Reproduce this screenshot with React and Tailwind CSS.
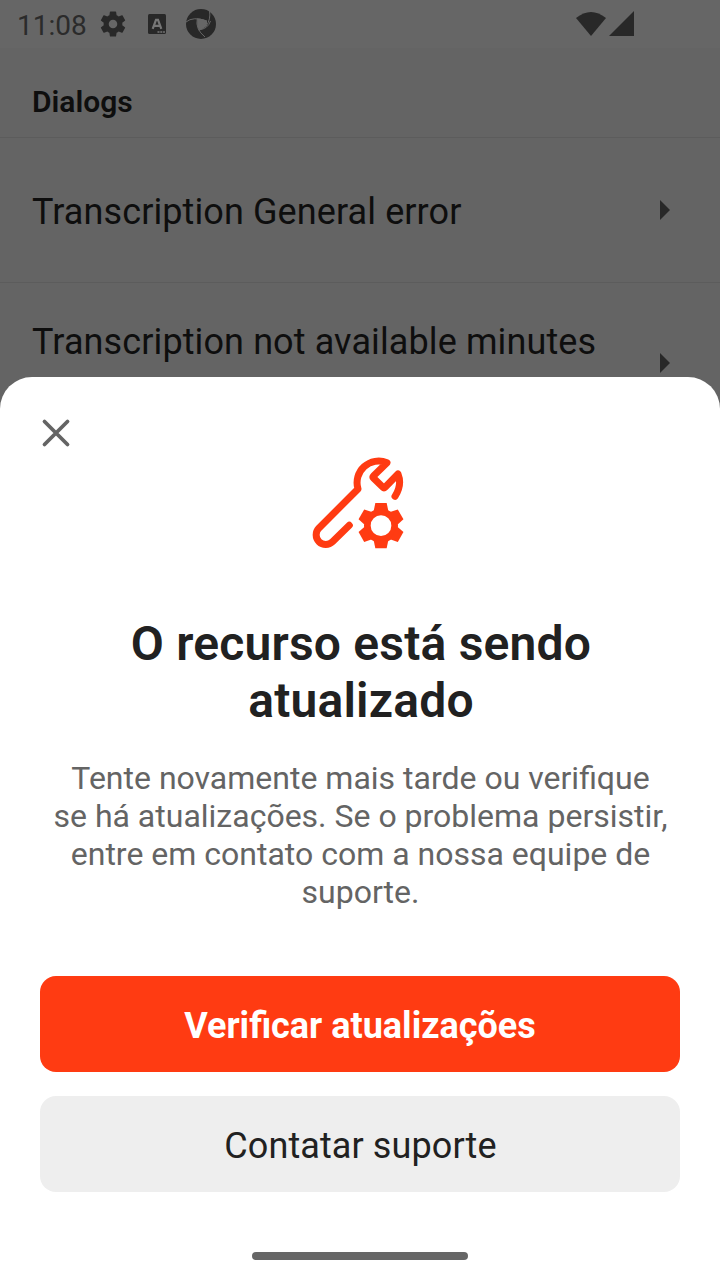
function StatusIcons() {
  return (
    <div className="flex h-12 items-center">
      <span className="w-[85px] pt-1 pl-[17px] text-[28px] leading-[44px] text-[#2b2b2b]">11:08</span>
      <svg className="ml-[15px] shrink-0" width="26" height="26" viewBox="2 2 20 20" fill="#282828">
        <path d="M19.14 12.94c.04-.3.06-.61.06-.94 0-.32-.02-.64-.07-.94l2.03-1.58c.18-.14.23-.41.12-.61l-1.92-3.32c-.12-.22-.37-.29-.59-.22l-2.39.96c-.5-.38-1.03-.7-1.62-.94l-.36-2.54c-.04-.24-.24-.41-.48-.41h-3.84c-.24 0-.43.17-.47.41l-.36 2.54c-.59.24-1.13.57-1.62.94l-2.39-.96c-.22-.08-.47 0-.59.22L2.740 8.87c-.12.21-.08.47.12.61l2.03 1.58c-.05.3-.09.63-.09.94s.02.64.07.94l-2.03 1.58c-.18.14-.23.41-.12.61l1.92 3.32c.12.22.37.29.59.22l2.39-.96c.5.38 1.030.7 1.62.94l.36 2.54c.05.24.24.41.48.41h3.84c.24 0 .44-.17.47-.41l.36-2.54c.59-.24 1.13-.56 1.62-.94l2.39.96c.22.08.47 0 .59-.22l1.92-3.32c.12-.22.07-.47-.12-.61l-2.01-1.58zM12 15.300a3.300 3.300 0 1 1 0-6.600 3.300 3.300 0 0 1 0 6.600z" />
      </svg>
      <svg className="ml-[21px] shrink-0" width="20" height="22" viewBox="0 0 20 22">
        <rect x="1" y="1" width="18" height="20" rx="1.5" fill="#282828" />
        <path d="M5.700 15.800 9 6.800h2l3.300 9M7.300 12.800h5.400" fill="none" stroke="#777" strokeWidth="2.200" />
        <path d="M10.500 19h2m.8 0h2m.8 0h1.800" stroke="#777" strokeWidth="1.500" />
      </svg>
      <svg className="ml-[19px] shrink-0" width="30" height="30" viewBox="-15 -15 30 30">
        <circle r="15" fill="#282828" />
        <path d="M-3.700-5.500Q2-6 6-3Q6.500 0 5 2.500Q2 5.500-2.500 6Q-4.500 0-3.700-5.500Z" fill="#666" />
        <g fill="none" stroke="#666" strokeWidth="1">
          <path d="M-15-2Q-8-8 6-3" />
          <path d="M8.500-13Q10-5 5 2.500" />
          <path d="M-2.500 6Q7 5 9.500-3" />
          <path d="M-3.700-5.500Q-6 5 4 13" />
        </g>
      </svg>
      <svg className="ml-[360px] shrink-0" width="60" height="26" viewBox="0 0 60 26" fill="#282828">
        <path d="M0 7Q15-5 30 7L15 25Z" />
        <path d="M33 25 58 0V25Z" />
      </svg>
    </div>
  );
}

function Arrow() {
  return (
    <svg width="10" height="20" viewBox="0 0 10 20" fill="#282828">
      <path d="M0 0 10 10 0 20Z" />
    </svg>
  );
}

const toothAngles = [0, 60, 120, 180, 240, 300];

function WrenchIcon() {
  return (
    <svg className="mx-auto block" width="120" height="115" viewBox="0 0 360 345">
      <path
        d="M148 241 97.500 290.500A29 29 0 0 1 56.500 249.500L174 132A65 65 0 0 1 261 53L221 92Q217 96 221 100L248 126Q252 130 256 126L294 87Q307 120 285 154"
        fill="none"
        stroke="#ff3b12"
        strokeWidth="21"
        strokeLinecap="round"
        strokeLinejoin="round"
      />
      <g transform="translate(243 242)">
        <circle r="41" fill="none" stroke="#ff3b12" strokeWidth="20" />
        {toothAngles.map((a) => (
          <path key={a} d="M-17-68H17L22-44H-22Z" fill="#ff3b12" transform={`rotate(${a})`} />
        ))}
      </g>
    </svg>
  );
}

export default function App() {
  return (
    <div className="relative h-[1280px] w-[720px] overflow-hidden bg-[#646464] font-['Roboto',sans-serif]">
      <div className="bg-[#666666]">
        <StatusIcons />
      </div>
      <h2 className="flex h-[90px] items-center border-b border-[#5c5c5c] px-8 pt-[18px] text-[30px] leading-[34px] font-semibold text-[#0e0e0e]">
        Dialogs
      </h2>
      <div className="flex h-[145px] items-center justify-between border-b border-[#5c5c5c] pr-[50px] pl-8 text-4xl leading-[42px] tracking-[0.1px] text-[#0e0e0e]">
        <span className="pt-1">Transcription General error</span>
        <Arrow />
      </div>
      <div className="flex h-[160px] items-center justify-between pr-[50px] pl-8 text-4xl leading-[42px] tracking-[0.11px] text-[#0e0e0e]">
        <span className="pb-[42px]">Transcription not available minutes</span>
        <Arrow />
      </div>

      <section className="absolute inset-x-0 bottom-0 flex h-[903px] flex-col rounded-t-[32px] bg-white px-10">
        <button className="mt-10 h-8 w-8" aria-label="Fechar">
          <svg width="32" height="32" viewBox="0 0 32 32" stroke="#646464" strokeWidth="3.800" strokeLinecap="round">
            <path d="M4.500 4.500 27.500 27.500M27.500 4.500 4.500 27.500" />
          </svg>
        </button>
        <div className="-mt-1">
          <WrenchIcon />
        </div>
        <h1 className="mt-[55px] pl-[2px] text-center text-5xl leading-[57px] font-semibold tracking-[0.2px] text-[#212121]">
          O recurso está sendo<br />atualizado
        </h1>
        <p className="mt-[30px] pl-px text-center text-[32px] leading-[38px] whitespace-nowrap text-[#646464]">
          Tente novamente mais tarde ou verifique<br />
          se há atualizações. Se o problema persistir,<br />
          entre em contato com a nossa equipe de<br />
          suporte.
        </p>
        <button className="mt-[65px] h-24 shrink-0 rounded-2xl bg-[#ff3b12] pt-1 text-4xl font-bold text-white">
          Verificar atualizações
        </button>
        <button className="mt-6 h-24 shrink-0 rounded-2xl bg-[#eeeeee] pt-1 pl-px text-4xl tracking-[0.1px] text-[#212121]">
          Contatar suporte
        </button>
        <div className="mx-auto mt-[60px] h-2 w-[216px] rounded-full bg-[#666666]" />
      </section>
    </div>
  );
}
